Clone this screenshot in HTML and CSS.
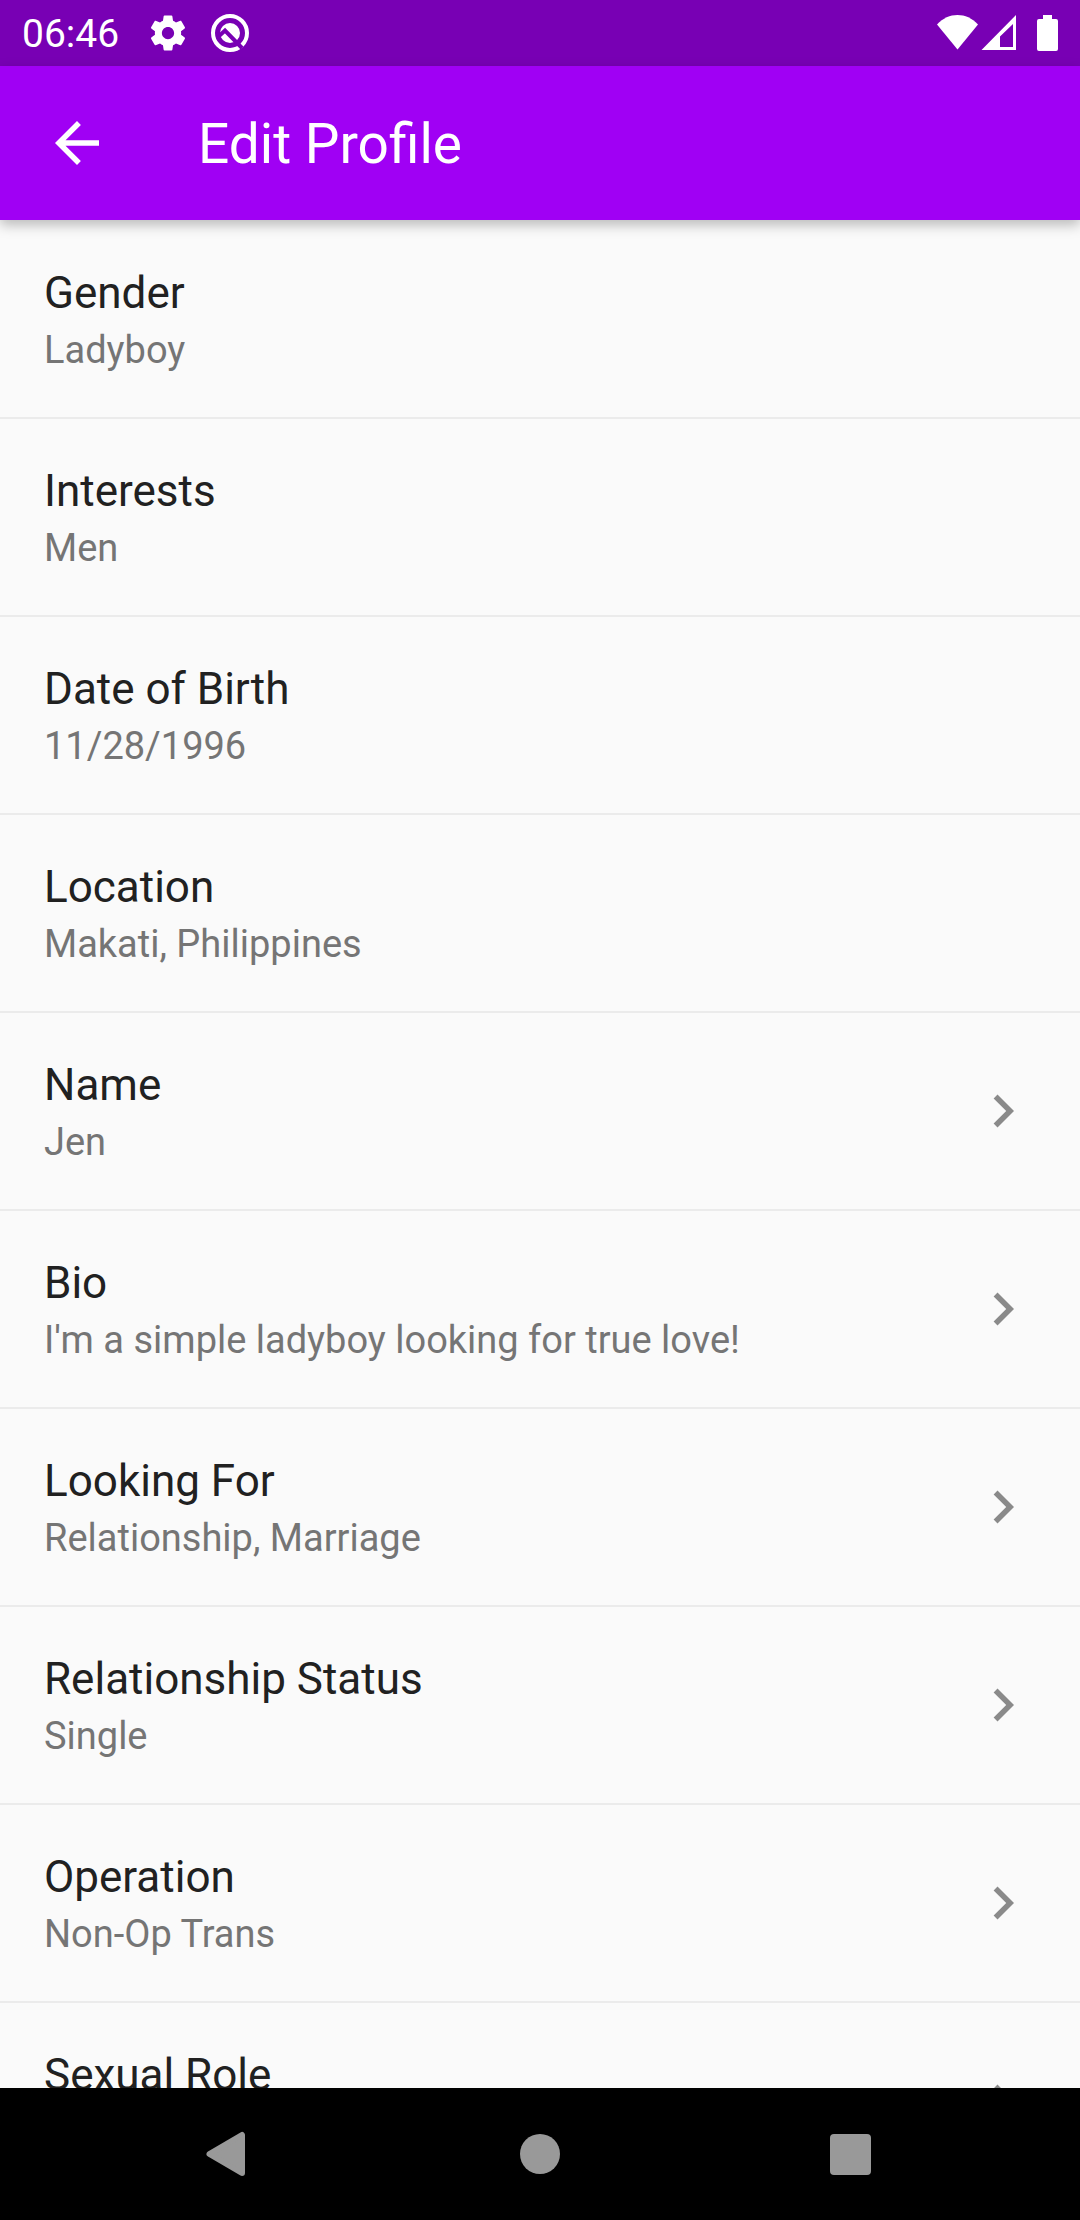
FILE: index.html
```html
<!DOCTYPE html>
<html lang="en">
<head>
<meta charset="utf-8">
<meta name="viewport" content="width=device-width, initial-scale=1">
<title>Edit Profile</title>
<link rel="stylesheet" href="styles.css">
</head>
<body class="screen">
  <svg class="sprite" aria-hidden="true">
    <symbol id="chevron" viewBox="0 0 24 24"><path d="M10 6 8.59 7.41 13.17 12l-4.58 4.59L10 18l6-6z"/></symbol>
  </svg>

  <div class="status-bar">
    <div class="status-left">
      <time class="clock">06:46</time>
      <svg class="status-icon" viewBox="0 0 24 24" role="img" aria-label="Settings"><path d="M19.43 12.98c.04-.32.07-.64.07-.98s-.03-.66-.07-.98l2.11-1.65c.19-.15.24-.42.12-.64l-2-3.46c-.12-.22-.39-.3-.61-.22l-2.49 1c-.52-.4-1.08-.73-1.69-.98l-.38-2.65C14.46 2.18 14.25 2 14 2h-4c-.25 0-.46.18-.49.42l-.38 2.65c-.61.25-1.17.59-1.69.98l-2.49-1c-.23-.09-.49 0-.61.22l-2 3.46c-.13.22-.07.49.12.64l2.11 1.65c-.04.32-.07.65-.07.98s.03.66.07.98l-2.11 1.65c-.19.15-.24.42-.12.64l2 3.46c.12.22.39.3.61.22l2.49-1c.52.4 1.08.73 1.69.98l.38 2.65c.03.24.24.42.49.42h4c.25 0 .46-.18.49-.42l.38-2.65c.61-.25 1.17-.59 1.69-.98l2.49 1c.23.09.49 0 .61-.22l2-3.46c.12-.22.07-.49-.12-.64l-2.11-1.65zM12 15.5c-1.93 0-3.5-1.57-3.5-3.5s1.57-3.5 3.5-3.5 3.5 1.57 3.5 3.5-1.57 3.5-3.5 3.5z"/></svg>
      <svg class="status-icon" viewBox="0 0 42 42" role="img" aria-label="System notification">
        <circle class="ring" cx="21" cy="21" r="17"/>
        <circle cx="21" cy="21" r="10"/>
        <path class="groove" d="M9.500 24.500 16 18.500 33 36"/>
      </svg>
    </div>
    <div class="status-right">
      <svg class="signal-icons" viewBox="0 0 80 36" role="img" aria-label="Wi-Fi and mobile signal">
        <path d="M0 9.500C6 3 13 0 20.500 0S35 3 41 9.500L20.500 34.500z"/>
        <path fill-rule="evenodd" d="M44.500 35 79 0V35zM63 32H76V9L63 21.500z"/>
      </svg>
      <svg class="battery-icon" viewBox="0 0 21 36" role="img" aria-label="Battery full"><path d="M6 0h9v4h4q2 0 2 2v28q0 2-2 2H2q-2 0-2-2V6q0-2 2-2h4z"/></svg>
    </div>
  </div>

  <header class="app-bar">
    <button class="back" type="button" aria-label="Back">
      <svg class="icon" viewBox="0 0 24 24"><path d="M20 11H7.83l5.590-5.590L12 4l-8 8 8 8 1.410-1.410L7.830 13H20z"/></svg>
    </button>
    <h1 class="title">Edit Profile</h1>
  </header>

  <main class="content">
    <ul class="list">
      <li class="item"><div class="row"><span class="text"><span class="label">Gender</span><span class="value">Ladyboy</span></span></div></li>
      <li class="item"><div class="row"><span class="text"><span class="label">Interests</span><span class="value">Men</span></span></div></li>
      <li class="item"><div class="row"><span class="text"><span class="label">Date of Birth</span><span class="value">11/28/1996</span></span></div></li>
      <li class="item"><div class="row"><span class="text"><span class="label">Location</span><span class="value">Makati, Philippines</span></span></div></li>
      <li class="item"><button class="row" type="button"><span class="text"><span class="label">Name</span><span class="value">Jen</span></span><svg class="icon chevron"><use href="#chevron"/></svg></button></li>
      <li class="item"><button class="row" type="button"><span class="text"><span class="label">Bio</span><span class="value">I'm a simple ladyboy looking for true love!</span></span><svg class="icon chevron"><use href="#chevron"/></svg></button></li>
      <li class="item"><button class="row" type="button"><span class="text"><span class="label">Looking For</span><span class="value">Relationship, Marriage</span></span><svg class="icon chevron"><use href="#chevron"/></svg></button></li>
      <li class="item"><button class="row" type="button"><span class="text"><span class="label">Relationship Status</span><span class="value">Single</span></span><svg class="icon chevron"><use href="#chevron"/></svg></button></li>
      <li class="item"><button class="row" type="button"><span class="text"><span class="label">Operation</span><span class="value">Non-Op Trans</span></span><svg class="icon chevron"><use href="#chevron"/></svg></button></li>
      <li class="item"><button class="row" type="button"><span class="text"><span class="label">Sexual Role</span><span class="value">&nbsp;</span></span><svg class="icon chevron"><use href="#chevron"/></svg></button></li>
    </ul>
  </main>

  <nav class="nav-bar" aria-label="System navigation">
    <button class="nav-button" type="button" aria-label="Back"><svg class="nav-icon" viewBox="0 0 48 48"><path class="rounded" d="M3.500 24 36 5V43z"/></svg></button>
    <button class="nav-button" type="button" aria-label="Home"><svg class="nav-icon" viewBox="0 0 48 48"><circle cx="24" cy="24" r="20"/></svg></button>
    <button class="nav-button" type="button" aria-label="Overview"><svg class="nav-icon" viewBox="0 0 48 48"><rect x="4" y="4" width="41" height="41" rx="4"/></svg></button>
  </nav>
</body>
</html>
```
FILE: styles.css
```css
* {
  box-sizing: border-box;
}

.screen {
  display: flex;
  flex-direction: column;
  height: 100vh;
  margin: 0;
  background: #fafafa;
  color: #212121;
  font-family: Roboto, "Liberation Sans", sans-serif;
}

.sprite {
  display: none;
}

button {
  margin: 0;
  padding: 0;
  border: 0;
  background: none;
  color: inherit;
  font: inherit;
  text-align: left;
  cursor: pointer;
}

svg {
  display: block;
  flex: none;
  fill: currentColor;
}

.icon {
  width: 66px;
  height: 66px;
}

/* Status bar */
.status-bar {
  display: flex;
  flex: none;
  align-items: center;
  justify-content: space-between;
  height: 66px;
  padding: 0 22px;
  background: #7800b4;
  color: #fff;
}

.status-left {
  display: flex;
  align-items: center;
  gap: 20px;
}

.clock {
  margin-right: 8px;
  padding-top: 2px;
  font-size: 39px;
  line-height: 48px;
}

.status-icon {
  width: 42px;
  height: 42px;
}

.ring {
  fill: none;
  stroke: currentColor;
  stroke-width: 4;
}

.groove {
  fill: none;
  stroke: #7800b4;
  stroke-width: 4;
}

.status-right {
  display: flex;
  gap: 20px;
}

.signal-icons {
  width: 80px;
  height: 36px;
}

.battery-icon {
  width: 21px;
  height: 36px;
}

/* App bar */
.app-bar {
  z-index: 1;
  display: flex;
  flex: none;
  align-items: center;
  gap: 88px;
  height: 154px;
  padding: 0 44px;
  background: #a000f4;
  box-shadow: 0 5px 12px rgba(0, 0, 0, 0.26);
  color: #fff;
}

.title {
  margin: 0;
  padding-top: 2px;
  font-size: 55px;
  font-weight: 400;
  line-height: 64px;
}

/* Profile fields */
.content {
  flex: 1;
  min-height: 0;
  overflow-y: auto;
  scrollbar-width: none;
}

.list {
  margin: 0;
  padding: 1px 0 0;
  list-style: none;
}

.item {
  border-bottom: 2px solid #ebebeb;
}

.row {
  display: flex;
  align-items: center;
  justify-content: space-between;
  width: 100%;
  min-height: 196px;
  padding: 0 44px;
}

.text {
  display: flex;
  flex-direction: column;
  gap: 8px;
  padding-top: 2px;
}

.label {
  font-size: 44px;
  line-height: 52px;
}

.value {
  color: #757575;
  font-size: 38px;
  line-height: 46px;
}

.chevron {
  color: #8a8a8a;
}

/* System navigation */
.nav-bar {
  display: flex;
  flex: none;
  align-items: center;
  justify-content: center;
  gap: 178px;
  height: 132px;
  background: #000;
  color: #999;
}

.nav-button {
  display: grid;
  place-items: center;
  width: 132px;
  height: 132px;
}

.nav-icon {
  width: 48px;
  height: 48px;
}

.rounded {
  stroke: currentColor;
  stroke-width: 6;
  stroke-linejoin: round;
}
```
